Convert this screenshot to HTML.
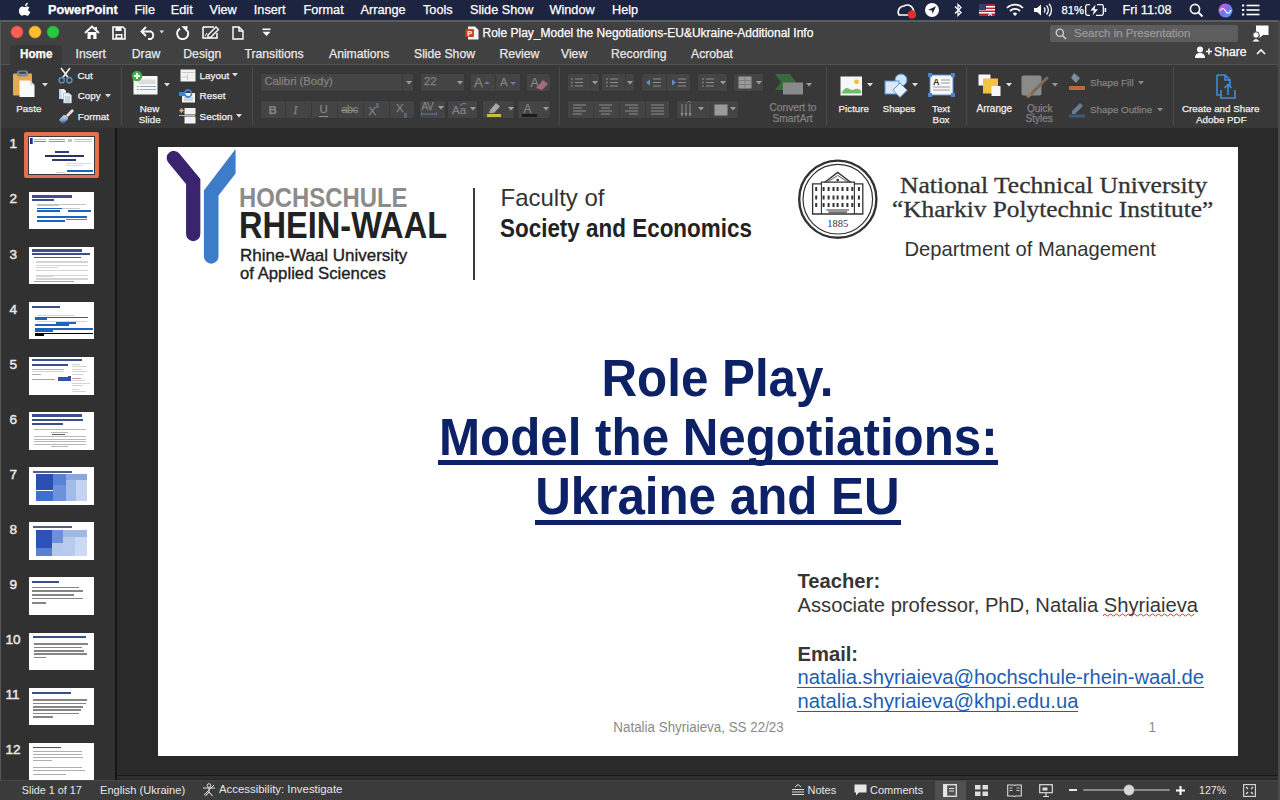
<!DOCTYPE html>
<html><head><meta charset="utf-8">
<style>
*{margin:0;padding:0;box-sizing:border-box}
html,body{width:1280px;height:800px;overflow:hidden;background:#282828;font-family:"Liberation Sans",sans-serif;position:relative}
.t{position:absolute;line-height:1;white-space:nowrap}
.k{-webkit-text-stroke:0.25px currentColor}
.r{position:absolute;display:block}
</style></head><body>

<div class="r" style="left:0px;top:0px;width:1280px;height:20px;background:#1d243f;"></div>
<div class="r" style="left:0px;top:20px;width:1280px;height:44px;background:#414141;"></div>
<div class="r" style="left:0px;top:20px;width:1280px;height:2px;background:#5a5d5e;"></div>
<div class="r" style="left:0px;top:64px;width:1280px;height:64px;background:#383838;"></div>
<div class="r" style="left:0px;top:64px;width:1280px;height:1px;background:#525252;"></div>
<div class="r" style="left:0px;top:128px;width:115px;height:652px;background:#313131;"></div>
<div class="r" style="left:0px;top:20px;width:1px;height:780px;background:#585858;"></div>
<div class="r" style="left:115px;top:128px;width:2px;height:652px;background:#161616;"></div>
<div class="r" style="left:117px;top:128px;width:1163px;height:647px;background:#2a2a2a;"></div>
<div class="r" style="left:115px;top:775px;width:1165px;height:1px;background:#171717;"></div>
<div class="r" style="left:117px;top:776px;width:1163px;height:4px;background:#2f2f2f;"></div>
<div class="r" style="left:117px;top:779px;width:1163px;height:1px;background:#262626;"></div>
<div class="r" style="left:0px;top:780px;width:1280px;height:20px;background:#3b3b3b;"></div>
<div class="r" style="left:0px;top:780px;width:1280px;height:1px;background:#454545;"></div>
<svg class="r" style="left:18px;top:2px;" width="14" height="16" viewBox="0 0 14 16"><path d="M9.6 0.5c0.1 1-0.3 2-0.9 2.7c-0.6 0.7-1.5 1.2-2.4 1.1c-0.1-1 0.4-2 0.9-2.6C7.8 1 8.8 0.5 9.6 0.5zM12.6 11.1c-0.4 0.9-0.6 1.3-1.1 2.1c-0.7 1.1-1.7 2.4-2.9 2.4c-1.1 0-1.4-0.7-2.8-0.7c-1.5 0-1.8 0.7-2.9 0.7c-1.2 0-2.1-1.2-2.8-2.3C-1.9 10.3-0.2 5 2.9 4.9c1.1 0 1.9 0.7 2.8 0.7c0.9 0 1.5-0.7 2.9-0.7c1 0 2.1 0.6 2.8 1.5C9 7.7 9.4 10.6 12.6 11.1z" fill="#fff" transform="translate(1.6,0.3) scale(0.86)"/></svg>
<div class="t k" style="left:48.00px;top:3.85px;font-size:12.7px;color:#fff;font-weight:700;font-family:'Liberation Sans',sans-serif;transform:scaleX(1.0);">PowerPoint</div>
<div class="t k" style="left:134.50px;top:3.85px;font-size:12.7px;color:#fff;font-weight:400;font-family:'Liberation Sans',sans-serif;">File</div>
<div class="t k" style="left:170.80px;top:3.85px;font-size:12.7px;color:#fff;font-weight:400;font-family:'Liberation Sans',sans-serif;">Edit</div>
<div class="t k" style="left:209.50px;top:3.85px;font-size:12.7px;color:#fff;font-weight:400;font-family:'Liberation Sans',sans-serif;">View</div>
<div class="t k" style="left:253.80px;top:3.85px;font-size:12.7px;color:#fff;font-weight:400;font-family:'Liberation Sans',sans-serif;">Insert</div>
<div class="t k" style="left:303.50px;top:3.85px;font-size:12.7px;color:#fff;font-weight:400;font-family:'Liberation Sans',sans-serif;">Format</div>
<div class="t k" style="left:360.50px;top:3.85px;font-size:12.7px;color:#fff;font-weight:400;font-family:'Liberation Sans',sans-serif;">Arrange</div>
<div class="t k" style="left:423.00px;top:3.85px;font-size:12.7px;color:#fff;font-weight:400;font-family:'Liberation Sans',sans-serif;">Tools</div>
<div class="t k" style="left:470.00px;top:3.85px;font-size:12.7px;color:#fff;font-weight:400;font-family:'Liberation Sans',sans-serif;">Slide Show</div>
<div class="t k" style="left:549.50px;top:3.85px;font-size:12.7px;color:#fff;font-weight:400;font-family:'Liberation Sans',sans-serif;">Window</div>
<div class="t k" style="left:612.00px;top:3.85px;font-size:12.7px;color:#fff;font-weight:400;font-family:'Liberation Sans',sans-serif;">Help</div>
<svg class="r" style="left:896px;top:3px;" width="22" height="16" viewBox="0 0 22 16"><path d="M3 12 a6 6 0 0 1 5-9 a6 6 0 0 1 9 3 a4 4 0 0 1 -2 6z" fill="none" stroke="#fff" stroke-width="1.6"/><circle cx="16" cy="11.5" r="4.2" fill="#e0302a"/></svg>
<svg class="r" style="left:925px;top:3px;" width="14" height="14" viewBox="0 0 14 14"><circle cx="7" cy="7" r="7" fill="#fff"/><path d="M3 7 L11 3.2 L7.5 11 L7 7.4z" fill="#1c223c"/></svg>
<svg class="r" style="left:953px;top:2px;" width="10" height="16" viewBox="0 0 10 16"><path d="M2 4.5 L8 10.5 L5 13.5 V2.5 L8 5.5 L2 11.5" fill="none" stroke="#fff" stroke-width="1.3"/></svg>
<svg class="r" style="left:979px;top:4px;" width="16" height="12" viewBox="0 0 16 12"><rect x="0" y="0" width="16" height="12" fill="#b22234"/><rect x="0" y="2" width="16" height="1.5" fill="#fff"/><rect x="0" y="5" width="16" height="1.5" fill="#fff"/><rect x="0" y="8" width="16" height="1.5" fill="#fff"/><rect x="0" y="0" width="7" height="6" fill="#3c3b6e"/><text x="9" y="12" font-size="6" fill="#fff" font-family="Liberation Sans" font-weight="700">A</text></svg>
<svg class="r" style="left:1006px;top:3px;" width="18" height="14" viewBox="0 0 18 14"><path d="M1 5 A11 11 0 0 1 17 5" fill="none" stroke="#fff" stroke-width="1.8"/><path d="M4 8 A7 7 0 0 1 14 8" fill="none" stroke="#fff" stroke-width="1.8"/><path d="M6.8 10.8 A3 3 0 0 1 11.2 10.8 L9 13z" fill="#fff"/></svg>
<svg class="r" style="left:1033px;top:3px;" width="20" height="14" viewBox="0 0 20 14"><path d="M1 5 H4 L8 1.5 V12.5 L4 9 H1z" fill="#fff"/><path d="M11 4.5 a3.5 3.5 0 0 1 0 5 M13.5 2.5 a6.5 6.5 0 0 1 0 9 M16 0.8 a9 9 0 0 1 0 12.4" fill="none" stroke="#fff" stroke-width="1.3"/></svg>
<div class="t k" style="left:1061.50px;top:5.12px;font-size:11.2px;color:#fff;font-weight:400;font-family:'Liberation Sans',sans-serif;">81%</div>
<svg class="r" style="left:1085px;top:4px;" width="24" height="12" viewBox="0 0 24 12"><path d="M5 0.7 H2.5 Q0.7 0.7 0.7 2.5 V9.5 Q0.7 11.3 2.5 11.3 H5 M12 0.7 H16.5 Q18.3 0.7 18.3 2.5 V9.5 Q18.3 11.3 16.5 11.3 H11" fill="none" stroke="#fff" stroke-width="1.3"/><rect x="19.6" y="4" width="1.6" height="4" fill="#fff"/><path d="M10.5 0.5 L5.5 6.5 H9 L7.5 11.5 L13 5.2 H9.6z" fill="#fff"/></svg>
<div class="t k" style="left:1122.50px;top:3.85px;font-size:12.7px;color:#fff;font-weight:400;font-family:'Liberation Sans',sans-serif;">Fri 11:08</div>
<svg class="r" style="left:1189px;top:3px;" width="15" height="15" viewBox="0 0 15 15"><circle cx="6" cy="6" r="4.6" fill="none" stroke="#fff" stroke-width="1.6"/><path d="M9.5 9.5 L13.5 13.5" stroke="#fff" stroke-width="1.8"/></svg>
<svg class="r" style="left:1218px;top:3px;" width="15" height="15" viewBox="0 0 15 15"><defs><linearGradient id="sg" x1="0" y1="0" x2="1" y2="1"><stop offset="0" stop-color="#e45bd0"/><stop offset="0.5" stop-color="#7c6cf0"/><stop offset="1" stop-color="#3ab0f0"/></linearGradient></defs><circle cx="7.5" cy="7.5" r="7" fill="url(#sg)"/><path d="M2 8 Q5 3 7.5 8 T13 7" fill="none" stroke="#fff" stroke-width="1.2"/></svg>
<svg class="r" style="left:1242px;top:4px;" width="18" height="12" viewBox="0 0 18 12"><rect x="0" y="0.5" width="2.2" height="2" fill="#fff"/><rect x="0" y="5" width="2.2" height="2" fill="#fff"/><rect x="0" y="9.5" width="2.2" height="2" fill="#fff"/><rect x="4.5" y="0.7" width="13" height="1.6" fill="#fff"/><rect x="4.5" y="5.2" width="13" height="1.6" fill="#fff"/><rect x="4.5" y="9.7" width="13" height="1.6" fill="#fff"/></svg>
<svg class="r" style="left:9.5px;top:24.8px;" width="50" height="14" viewBox="0 0 50 14"><circle cx="7" cy="7" r="6" fill="#fe5f57" stroke="#e0443e" stroke-width="0.6"/><circle cx="25" cy="7" r="6" fill="#febc2e" stroke="#dea123" stroke-width="0.6"/><circle cx="43" cy="7" r="6" fill="#28c840" stroke="#1aab29" stroke-width="0.6"/></svg>
<svg class="r" style="left:84px;top:25px;" width="16" height="15" viewBox="0 0 16 15"><path d="M1 8 L8 1.5 L15 8" fill="none" stroke="#fff" stroke-width="1.8" stroke-linejoin="miter"/><path d="M3.5 7 V14 H6.7 V10 H9.3 V14 H12.5 V7" fill="#fff"/><rect x="11" y="2" width="2" height="4" fill="#fff"/></svg>
<svg class="r" style="left:112px;top:26px;" width="14" height="14" viewBox="0 0 14 14"><path d="M1 1 H11 L13 3 V13 H1z" fill="none" stroke="#fff" stroke-width="1.6"/><rect x="3.5" y="1" width="6" height="4" fill="#fff"/><rect x="3.5" y="8" width="7" height="5" fill="#fff"/><rect x="5" y="9.5" width="4" height="2" fill="#434343"/></svg>
<svg class="r" style="left:140px;top:25px;" width="26" height="15" viewBox="0 0 26 15"><path d="M6 2 L1.5 6.5 L6 11" fill="none" stroke="#fff" stroke-width="1.8"/><path d="M2 6.5 H11 A4.2 4.2 0 0 1 11 14 H8" fill="none" stroke="#fff" stroke-width="1.8"/><path d="M19.5 5.5 L24 5.5 L21.75 8.5z" fill="#ddd"/></svg>
<svg class="r" style="left:175px;top:25px;" width="15" height="16" viewBox="0 0 15 16"><path d="M5 3.6 A5.6 5.6 0 1 0 12.2 5.2" fill="none" stroke="#fff" stroke-width="1.9"/><path d="M6.5 1.2 H12.8 L11.6 6.8z" fill="#fff"/></svg>
<svg class="r" style="left:202px;top:25px;" width="18" height="15" viewBox="0 0 18 15"><path d="M1 2 H12 M1 2 V13 H15 V8" fill="none" stroke="#fff" stroke-width="1.5"/><path d="M6 10 L14 2 L16.5 4.5 L8.5 12.5 H6z" fill="none" stroke="#fff" stroke-width="1.4"/><path d="M3 11 L5 8" stroke="#fff" stroke-width="1"/></svg>
<svg class="r" style="left:232px;top:26px;" width="12" height="14" viewBox="0 0 12 14"><path d="M1 1 H7 L11 5 V13 H1z M7 1 V5 H11" fill="none" stroke="#fff" stroke-width="1.4"/></svg>
<svg class="r" style="left:262px;top:28px;" width="9" height="9" viewBox="0 0 9 9"><rect x="0.5" y="0.5" width="8" height="1.6" fill="#fff"/><path d="M0.5 3.8 H8.5 L4.5 8z" fill="#fff"/></svg>
<svg class="r" style="left:465px;top:26px;" width="14" height="14" viewBox="0 0 14 14"><path d="M3 0.5 H10 L13.5 4 V13.5 H3z" fill="#f4f4f4"/><rect x="0.5" y="3" width="8.5" height="8" rx="1" fill="#d0422b"/><text x="2.2" y="9.8" font-size="7.5" font-family="Liberation Sans" font-weight="700" fill="#fff">P</text></svg>
<div class="t k" style="left:482.50px;top:27.04px;font-size:12.0px;color:#fff;font-weight:400;font-family:'Liberation Sans',sans-serif;">Role Play_Model the Negotiations-EU&amp;Ukraine-Additional Info</div>
<div class="r" style="left:1050px;top:25px;width:188px;height:17px;background:#5d5d5d;border-radius:2px;"></div>
<svg class="r" style="left:1055px;top:28px;" width="12" height="12" viewBox="0 0 12 12"><circle cx="4.8" cy="4.8" r="3.6" fill="none" stroke="#cfcfcf" stroke-width="1.3"/><path d="M7.5 7.5 L11 11" stroke="#cfcfcf" stroke-width="1.5"/></svg>
<div class="t k" style="left:1074.00px;top:27.56px;font-size:11.5px;color:#9a9a9a;font-weight:400;font-family:'Liberation Sans',sans-serif;">Search in Presentation</div>
<svg class="r" style="left:1252px;top:24px;" width="18" height="18" viewBox="0 0 18 18"><path d="M4 1.5 H16.5 V11 H11 L7.5 14 V11 H4z" fill="#fff"/><circle cx="4" cy="11" r="3.2" fill="#fff" stroke="#434343" stroke-width="1"/><path d="M0.5 17.5 Q4 12.5 7.5 17.5z" fill="#fff"/></svg>
<div class="r" style="left:10px;top:45px;width:52px;height:20px;background:#383838;border-radius:3px 3px 0 0;"></div>
<div class="t k" style="left:19.50px;top:47.87px;font-size:12.2px;color:#fff;font-weight:700;font-family:'Liberation Sans',sans-serif;transform:scaleX(0.96);transform-origin:0 0;">Home</div>
<div class="t k" style="left:75.50px;top:47.87px;font-size:12.2px;color:#e8e8e8;font-weight:400;font-family:'Liberation Sans',sans-serif;">Insert</div>
<div class="t k" style="left:131.80px;top:47.87px;font-size:12.2px;color:#e8e8e8;font-weight:400;font-family:'Liberation Sans',sans-serif;">Draw</div>
<div class="t k" style="left:183.30px;top:47.87px;font-size:12.2px;color:#e8e8e8;font-weight:400;font-family:'Liberation Sans',sans-serif;">Design</div>
<div class="t k" style="left:244.50px;top:47.87px;font-size:12.2px;color:#e8e8e8;font-weight:400;font-family:'Liberation Sans',sans-serif;">Transitions</div>
<div class="t k" style="left:329.00px;top:47.87px;font-size:12.2px;color:#e8e8e8;font-weight:400;font-family:'Liberation Sans',sans-serif;">Animations</div>
<div class="t k" style="left:414.00px;top:47.87px;font-size:12.2px;color:#e8e8e8;font-weight:400;font-family:'Liberation Sans',sans-serif;">Slide Show</div>
<div class="t k" style="left:499.40px;top:47.87px;font-size:12.2px;color:#e8e8e8;font-weight:400;font-family:'Liberation Sans',sans-serif;">Review</div>
<div class="t k" style="left:561.00px;top:47.87px;font-size:12.2px;color:#e8e8e8;font-weight:400;font-family:'Liberation Sans',sans-serif;">View</div>
<div class="t k" style="left:611.00px;top:47.87px;font-size:12.2px;color:#e8e8e8;font-weight:400;font-family:'Liberation Sans',sans-serif;">Recording</div>
<div class="t k" style="left:691.00px;top:47.87px;font-size:12.2px;color:#e8e8e8;font-weight:400;font-family:'Liberation Sans',sans-serif;">Acrobat</div>
<svg class="r" style="left:1195px;top:46px;" width="17" height="12" viewBox="0 0 17 12"><circle cx="5" cy="3.5" r="3" fill="#fff"/><path d="M0 12 Q0 7 5 7 Q10 7 10 12z" fill="#fff"/><path d="M11 5.5 H17 M14 2.5 V8.5" stroke="#fff" stroke-width="1.6"/></svg>
<div class="t k" style="left:1214.00px;top:46.47px;font-size:12.2px;color:#fff;font-weight:400;font-family:'Liberation Sans',sans-serif;">Share</div>
<svg class="r" style="left:1256px;top:48px;" width="10" height="7" viewBox="0 0 10 7"><path d="M1 6 L5 2 L9 6" fill="none" stroke="#fff" stroke-width="1.6"/></svg>
<svg class="r" style="left:12px;top:70px;" width="24" height="28" viewBox="0 0 24 28"><rect x="1" y="3.5" width="19" height="22" rx="1" fill="#e8a84e"/><rect x="5" y="0.5" width="11" height="6" rx="2" fill="#7b8a92"/><rect x="7" y="1.8" width="7" height="2" rx="1" fill="#3d4448"/><path d="M7.5 10.5 H18 L22.5 15 V27 H7.5z" fill="#fafafa"/><path d="M18 10.5 V15 H22.5" fill="#d8d8d8"/></svg>
<svg class="r" style="left:41.7px;top:83px;" width="6" height="4" viewBox="0 0 6 4"><path d="M0 0 H6 L3 3.5z" fill="#ddd"/></svg>
<div class="t k" style="left:16.30px;top:103.70px;font-size:9.8px;color:#f0f0f0;font-weight:400;font-family:'Liberation Sans',sans-serif;">Paste</div>
<svg class="r" style="left:58px;top:67px;" width="15" height="17" viewBox="0 0 15 17"><path d="M3 1 L10.5 11 M12 1 L4.5 11" stroke="#f2f2f2" stroke-width="1.6"/><circle cx="3.7" cy="13.2" r="2.6" fill="none" stroke="#5d86ad" stroke-width="1.6"/><circle cx="11.3" cy="13.2" r="2.6" fill="none" stroke="#5d86ad" stroke-width="1.6"/></svg>
<div class="t k" style="left:77.40px;top:70.92px;font-size:9.9px;color:#f0f0f0;font-weight:400;font-family:'Liberation Sans',sans-serif;">Cut</div>
<svg class="r" style="left:58px;top:88px;" width="15" height="16" viewBox="0 0 15 16"><path d="M1 1 H6 L8 3 V11 H1z" fill="#f2f2f2"/><rect x="1" y="1" width="2.5" height="10" fill="#bcd4ec"/><path d="M5.5 5 H11 L13.5 7.5 V15 H5.5z" fill="#e6eef8" stroke="#9fb4c8" stroke-width="0.6"/><path d="M7 9 H12 M7 11 H12 M7 13 H12" stroke="#8aa" stroke-width="0.7"/></svg>
<div class="t k" style="left:77.70px;top:91.22px;font-size:9.9px;color:#f0f0f0;font-weight:400;font-family:'Liberation Sans',sans-serif;">Copy</div>
<svg class="r" style="left:105.2px;top:94px;" width="6" height="4" viewBox="0 0 6 4"><path d="M0 0 H6 L3 3.5z" fill="#ddd"/></svg>
<svg class="r" style="left:58px;top:109px;" width="16" height="16" viewBox="0 0 16 16"><defs><linearGradient id="bg1" x1="0" y1="0" x2="0" y2="1"><stop offset="0" stop-color="#dbe8f4"/><stop offset="0.55" stop-color="#7fa6d0"/><stop offset="1" stop-color="#24407a"/></linearGradient></defs><path d="M9.8 6.2 L14.2 1.8" stroke="#f3dde4" stroke-width="2.8" stroke-linecap="round"/><path d="M7.2 6 L10 8.8 L8.8 10 L6 7.2z" fill="#e8e0c8"/><path d="M0.8 11 L6 5.8 L10.2 10 L5 15.2z" fill="url(#bg1)"/></svg>
<div class="t k" style="left:77.70px;top:111.62px;font-size:9.9px;color:#f0f0f0;font-weight:400;font-family:'Liberation Sans',sans-serif;">Format</div>
<div class="r" style="left:121px;top:67px;width:1px;height:58px;background:#4c4c4c;"></div>
<svg class="r" style="left:131px;top:70px;" width="28" height="26" viewBox="0 0 28 26"><rect x="2.5" y="6" width="24" height="18.5" fill="#f7f7f7"/><rect x="7.5" y="9.5" width="17" height="4.5" rx="1" fill="#dcdcdc"/><path d="M9 16.5 H25 M9 19.5 H25" stroke="#8fb0c0" stroke-width="1"/><path d="M6 16.5 H8 M6 19.5 H8" stroke="#7fb07f" stroke-width="1"/><circle cx="6" cy="6" r="5.2" fill="#3fae49"/><path d="M6 3 V9 M3 6 H9" stroke="#fff" stroke-width="1.8"/></svg>
<svg class="r" style="left:163.8px;top:83px;" width="6" height="4" viewBox="0 0 6 4"><path d="M0 0 H6 L3 3.5z" fill="#ddd"/></svg>
<div class="t k" style="left:139.70px;top:103.80px;font-size:9.8px;color:#f0f0f0;font-weight:400;font-family:'Liberation Sans',sans-serif;">New</div>
<div class="t k" style="left:138.80px;top:114.50px;font-size:9.8px;color:#f0f0f0;font-weight:400;font-family:'Liberation Sans',sans-serif;">Slide</div>
<svg class="r" style="left:180px;top:69px;" width="16" height="13" viewBox="0 0 16 13"><rect x="0.5" y="0.5" width="15" height="12" fill="#f2f2f2"/><path d="M2 3.5 H14 M7.5 5.5 V11 M2 8 H7" stroke="#c8c8c8" stroke-width="1"/></svg>
<div class="t k" style="left:199.60px;top:70.62px;font-size:9.9px;color:#f0f0f0;font-weight:400;font-family:'Liberation Sans',sans-serif;">Layout</div>
<svg class="r" style="left:232px;top:73.2px;" width="6" height="4" viewBox="0 0 6 4"><path d="M0 0 H6 L3 3.5z" fill="#ddd"/></svg>
<svg class="r" style="left:179px;top:88px;" width="17" height="15" viewBox="0 0 17 15"><rect x="3" y="5" width="13" height="9.5" fill="#f2f2f2"/><path d="M5 10 H14 M5 12 H14" stroke="#aaa" stroke-width="0.8"/><rect x="0" y="4" width="6" height="4" fill="#3b82d8"/><circle cx="9" cy="5.5" r="3.5" fill="none" stroke="#3b82d8" stroke-width="1.8"/></svg>
<div class="t k" style="left:199.60px;top:91.32px;font-size:9.9px;color:#f0f0f0;font-weight:400;font-family:'Liberation Sans',sans-serif;">Reset</div>
<svg class="r" style="left:179px;top:107px;" width="17" height="17" viewBox="0 0 17 17"><rect x="5.5" y="1" width="11" height="6.5" fill="#f2f2f2"/><rect x="5.5" y="9.5" width="11" height="7" fill="#f2f2f2"/><path d="M0 8.5 H16" stroke="#e8c890" stroke-width="0.9"/><path d="M2.5 1 L2.5 6 M0 3.5 H5 M0.8 1.8 L4.2 5.2 M4.2 1.8 L0.8 5.2" stroke="#e8b86a" stroke-width="0.8"/></svg>
<div class="t k" style="left:199.60px;top:111.62px;font-size:9.9px;color:#f0f0f0;font-weight:400;font-family:'Liberation Sans',sans-serif;">Section</div>
<svg class="r" style="left:235.5px;top:114.3px;" width="6" height="4" viewBox="0 0 6 4"><path d="M0 0 H6 L3 3.5z" fill="#ddd"/></svg>
<div class="r" style="left:252px;top:67px;width:1px;height:58px;background:#4c4c4c;"></div>
<div class="r" style="left:260px;top:73px;width:154px;height:19px;background:#444444;border:1px solid #363636;border-radius:2px;"></div>
<div class="t k" style="left:264.40px;top:76.43px;font-size:11.3px;color:#828282;font-weight:400;font-family:'Liberation Sans',sans-serif;">Calibri (Body)</div>
<div class="r" style="left:402px;top:74px;width:1px;height:17px;background:#3a3a3a;"></div>
<svg class="r" style="left:406px;top:80.5px;" width="6" height="4" viewBox="0 0 6 4"><path d="M0 0 H6 L3 3.5z" fill="#9a9a9a"/></svg>
<div class="r" style="left:420px;top:73px;width:45px;height:19px;background:#444444;border:1px solid #363636;border-radius:2px;"></div>
<div class="t k" style="left:424.00px;top:76.43px;font-size:11.3px;color:#828282;font-weight:400;font-family:'Liberation Sans',sans-serif;">22</div>
<svg class="r" style="left:456.5px;top:80.5px;" width="6" height="4" viewBox="0 0 6 4"><path d="M0 0 H6 L3 3.5z" fill="#9a9a9a"/></svg>
<div class="r" style="left:470px;top:73px;width:51px;height:19px;background:#444444;border:1px solid #363636;border-radius:2px;"></div>
<div class="r" style="left:495px;top:74px;width:1px;height:17px;background:#3a3a3a;"></div>
<div class="t k" style="left:474.00px;top:75.77px;font-size:13.5px;color:#828282;font-weight:400;font-family:'Liberation Sans',sans-serif;">A</div>
<svg class="r" style="left:484px;top:80px;" width="6" height="6" viewBox="0 0 6 6"><path d="M0 4 L3 1 L6 4" fill="#5b7fa8"/></svg>
<div class="t k" style="left:500.00px;top:76.76px;font-size:11.5px;color:#828282;font-weight:400;font-family:'Liberation Sans',sans-serif;">A</div>
<svg class="r" style="left:510px;top:81px;" width="6" height="5" viewBox="0 0 6 5"><path d="M0 1 H6 L3 4z" fill="#5b7fa8"/></svg>
<div class="r" style="left:526px;top:73px;width:25px;height:19px;background:#444444;border:1px solid #363636;border-radius:2px;"></div>
<svg class="r" style="left:528px;top:74px;" width="22" height="17" viewBox="0 0 22 17"><text x="2.5" y="13" font-size="12.5" font-family="Liberation Sans" fill="#8c8c8c">A</text><path d="M8 14 L15 6 L20 10 L14 16z" fill="#a86878"/></svg>
<div class="r" style="left:260px;top:100px;width:155px;height:19px;background:#444444;border:1px solid #363636;border-radius:2px;"></div>
<div class="r" style="left:285px;top:101px;width:1px;height:17px;background:#3a3a3a;"></div>
<div class="r" style="left:311px;top:101px;width:1px;height:17px;background:#3a3a3a;"></div>
<div class="r" style="left:337px;top:101px;width:1px;height:17px;background:#3a3a3a;"></div>
<div class="r" style="left:363px;top:101px;width:1px;height:17px;background:#3a3a3a;"></div>
<div class="r" style="left:389px;top:101px;width:1px;height:17px;background:#3a3a3a;"></div>
<div class="t k" style="left:268.50px;top:104.56px;font-size:11.5px;color:#828282;font-weight:700;font-family:'Liberation Sans',sans-serif;">B</div>
<div class="t k" style="left:293.50px;top:104.56px;font-size:11.5px;color:#828282;font-weight:400;font-family:'Liberation Sans',sans-serif;font-style:italic;font-family:'Liberation Serif',serif;">I</div>
<div class="t k" style="left:319.50px;top:103.76px;font-size:11.5px;color:#828282;font-weight:400;font-family:'Liberation Sans',sans-serif;">U</div>
<div class="r" style="left:319px;top:116px;width:9px;height:1px;background:#8c8c8c;"></div>
<div class="t k" style="left:341.50px;top:104.19px;font-size:11px;color:#828282;font-weight:400;font-family:'Liberation Sans',sans-serif;letter-spacing:-0.5px;">abc</div>
<div class="r" style="left:341px;top:110px;width:17px;height:1px;background:#8c8c8c;"></div>
<div class="t k" style="left:368.50px;top:105.76px;font-size:11.5px;color:#828282;font-weight:400;font-family:'Liberation Sans',sans-serif;">X</div>
<div class="r" style="left:376px;top:103px;width:3px;height:5px;background:#4e6680;"></div>
<div class="t k" style="left:396.00px;top:103.26px;font-size:11.5px;color:#828282;font-weight:400;font-family:'Liberation Sans',sans-serif;">X</div>
<div class="r" style="left:404px;top:113px;width:3px;height:5px;background:#4e6680;"></div>
<div class="r" style="left:419px;top:100px;width:27px;height:19px;background:#444444;border:1px solid #363636;border-radius:2px;"></div>
<div class="t k" style="left:421.50px;top:102.03px;font-size:10px;color:#828282;font-weight:400;font-family:'Liberation Sans',sans-serif;letter-spacing:-0.5px;">AV</div>
<svg class="r" style="left:421px;top:112px;" width="16" height="4" viewBox="0 0 16 4"><path d="M0 2 H16 M0 0 V4 M16 0 V4" stroke="#5b7fa8" stroke-width="1"/></svg>
<svg class="r" style="left:438px;top:106px;" width="6" height="4" viewBox="0 0 6 4"><path d="M0 0 H6 L3 3.5z" fill="#9a9a9a"/></svg>
<div class="r" style="left:447px;top:100px;width:31px;height:19px;background:#444444;border:1px solid #363636;border-radius:2px;"></div>
<div class="t k" style="left:452.00px;top:105.26px;font-size:11.5px;color:#828282;font-weight:400;font-family:'Liberation Sans',sans-serif;">Aa</div>
<svg class="r" style="left:459px;top:102px;" width="8" height="5" viewBox="0 0 8 5"><path d="M1 4 Q4 0 7 2" fill="none" stroke="#5b7fa8" stroke-width="1.2"/></svg>
<svg class="r" style="left:470px;top:106.5px;" width="6" height="4" viewBox="0 0 6 4"><path d="M0 0 H6 L3 3.5z" fill="#9a9a9a"/></svg>
<div class="r" style="left:482px;top:100px;width:33px;height:19px;background:#444444;border:1px solid #363636;border-radius:2px;"></div>
<svg class="r" style="left:486px;top:101px;" width="16" height="17" viewBox="0 0 16 17"><path d="M4 9 L10 2 L14 5.5 L8 12z" fill="#a8a8a8"/><path d="M4 9 L3 12 L8 12" fill="#a8a8a8"/><rect x="1" y="13" width="14" height="3" fill="#c8bf3a"/></svg>
<svg class="r" style="left:507.5px;top:106.5px;" width="6" height="4" viewBox="0 0 6 4"><path d="M0 0 H6 L3 3.5z" fill="#b89a9a"/></svg>
<div class="r" style="left:517px;top:100px;width:34px;height:19px;background:#444444;border:1px solid #363636;border-radius:2px;"></div>
<div class="t k" style="left:523.50px;top:102.64px;font-size:12px;color:#828282;font-weight:400;font-family:'Liberation Sans',sans-serif;">A</div>
<div class="r" style="left:522px;top:114px;width:15px;height:3px;background:#1a1a1a;"></div>
<svg class="r" style="left:543px;top:106.5px;" width="6" height="4" viewBox="0 0 6 4"><path d="M0 0 H6 L3 3.5z" fill="#9a9a9a"/></svg>
<div class="r" style="left:559px;top:67px;width:1px;height:58px;background:#4c4c4c;"></div>
<div class="r" style="left:567px;top:73px;width:33px;height:19px;background:#444444;border:1px solid #363636;border-radius:2px;"></div>
<div class="r" style="left:590px;top:74px;width:1px;height:17px;background:#3a3a3a;"></div>
<svg class="r" style="left:570px;top:77px;" width="14" height="11" viewBox="0 0 14 11"><path d="M5 2 H13 M5 5.5 H13 M5 9 H13" stroke="#8c8c8c" stroke-width="1"/><circle cx="2" cy="2" r="1" fill="#5b7fa8"/><circle cx="2" cy="5.5" r="1" fill="#5b7fa8"/><circle cx="2" cy="9" r="1" fill="#5b7fa8"/></svg>
<svg class="r" style="left:592px;top:80.5px;" width="6" height="4" viewBox="0 0 6 4"><path d="M0 0 H6 L3 3.5z" fill="#9a9a9a"/></svg>
<div class="r" style="left:601px;top:73px;width:34px;height:19px;background:#444444;border:1px solid #363636;border-radius:2px;"></div>
<div class="r" style="left:625px;top:74px;width:1px;height:17px;background:#3a3a3a;"></div>
<svg class="r" style="left:605px;top:77px;" width="14" height="11" viewBox="0 0 14 11"><path d="M5 2 H13 M5 5.5 H13 M5 9 H13" stroke="#8c8c8c" stroke-width="1"/><circle cx="2" cy="2" r="1" fill="#5b7fa8"/><circle cx="2" cy="5.5" r="1" fill="#5b7fa8"/><circle cx="2" cy="9" r="1" fill="#5b7fa8"/></svg>
<svg class="r" style="left:627px;top:80.5px;" width="6" height="4" viewBox="0 0 6 4"><path d="M0 0 H6 L3 3.5z" fill="#9a9a9a"/></svg>
<div class="r" style="left:641px;top:73px;width:50px;height:19px;background:#444444;border:1px solid #363636;border-radius:2px;"></div>
<div class="r" style="left:666px;top:74px;width:1px;height:17px;background:#3a3a3a;"></div>
<svg class="r" style="left:645px;top:77px;" width="18" height="11" viewBox="0 0 18 11"><path d="M8 2 H16 M8 5.5 H16 M8 9 H16" stroke="#8c8c8c" stroke-width="1"/><path d="M1 5.5 L5 2.5 V8.5z" fill="#5b8fd0"/></svg>
<svg class="r" style="left:670px;top:77px;" width="18" height="11" viewBox="0 0 18 11"><path d="M8 2 H16 M8 5.5 H16 M8 9 H16" stroke="#8c8c8c" stroke-width="1"/><path d="M6 5.5 L2 2.5 V8.5z" fill="#5b8fd0"/></svg>
<div class="r" style="left:697px;top:73px;width:31px;height:19px;background:#444444;border:1px solid #363636;border-radius:2px;"></div>
<svg class="r" style="left:701px;top:77px;" width="14" height="11" viewBox="0 0 14 11"><path d="M5 2 H13 M5 5.5 H13 M5 9 H13" stroke="#8c8c8c" stroke-width="1"/><circle cx="2" cy="2" r="1" fill="#5b7fa8"/><circle cx="2" cy="5.5" r="1" fill="#5b7fa8"/><circle cx="2" cy="9" r="1" fill="#5b7fa8"/></svg>
<svg class="r" style="left:720px;top:80.5px;" width="6" height="4" viewBox="0 0 6 4"><path d="M0 0 H6 L3 3.5z" fill="#9a9a9a"/></svg>
<div class="r" style="left:733px;top:73px;width:31px;height:19px;background:#444444;border:1px solid #363636;border-radius:2px;"></div>
<svg class="r" style="left:738px;top:76px;" width="14" height="13" viewBox="0 0 14 13"><rect x="0.5" y="0.5" width="13" height="12" fill="#9a9a9a"/><path d="M0.5 4.5 H13.5 M0.5 8.5 H13.5 M7 0.5 V12.5" stroke="#777" stroke-width="0.8"/></svg>
<svg class="r" style="left:756px;top:80.5px;" width="6" height="4" viewBox="0 0 6 4"><path d="M0 0 H6 L3 3.5z" fill="#9a9a9a"/></svg>
<div class="r" style="left:567px;top:100px;width:103px;height:19px;background:#444444;border:1px solid #363636;border-radius:2px;"></div>
<div class="r" style="left:593px;top:101px;width:1px;height:17px;background:#3a3a3a;"></div>
<div class="r" style="left:619px;top:101px;width:1px;height:17px;background:#3a3a3a;"></div>
<div class="r" style="left:645px;top:101px;width:1px;height:17px;background:#3a3a3a;"></div>
<svg class="r" style="left:573px;top:103px;" width="14" height="13" viewBox="0 0 14 13"><path d="M0 2 H13" stroke="#8c8c8c" stroke-width="1"/><path d="M0 5 H9" stroke="#8c8c8c" stroke-width="1"/><path d="M0 8 H13" stroke="#8c8c8c" stroke-width="1"/><path d="M0 11 H9" stroke="#8c8c8c" stroke-width="1"/></svg>
<svg class="r" style="left:599px;top:103px;" width="14" height="13" viewBox="0 0 14 13"><path d="M0.0 2 H13.0" stroke="#8c8c8c" stroke-width="1"/><path d="M2.0 5 H11.0" stroke="#8c8c8c" stroke-width="1"/><path d="M0.0 8 H13.0" stroke="#8c8c8c" stroke-width="1"/><path d="M2.0 11 H11.0" stroke="#8c8c8c" stroke-width="1"/></svg>
<svg class="r" style="left:625px;top:103px;" width="14" height="13" viewBox="0 0 14 13"><path d="M0 2 H13" stroke="#8c8c8c" stroke-width="1"/><path d="M4 5 H13" stroke="#8c8c8c" stroke-width="1"/><path d="M0 8 H13" stroke="#8c8c8c" stroke-width="1"/><path d="M4 11 H13" stroke="#8c8c8c" stroke-width="1"/></svg>
<svg class="r" style="left:651px;top:103px;" width="14" height="13" viewBox="0 0 14 13"><path d="M0 2 H13" stroke="#8c8c8c" stroke-width="1"/><path d="M0 5 H13" stroke="#8c8c8c" stroke-width="1"/><path d="M0 8 H13" stroke="#8c8c8c" stroke-width="1"/><path d="M0 11 H13" stroke="#8c8c8c" stroke-width="1"/></svg>
<div class="r" style="left:676px;top:100px;width:63px;height:19px;background:#444444;border:1px solid #363636;border-radius:2px;"></div>
<div class="r" style="left:710px;top:101px;width:1px;height:17px;background:#3a3a3a;"></div>
<svg class="r" style="left:680px;top:101px;" width="18" height="17" viewBox="0 0 18 17"><path d="M2 3 V15 M6 3 V15 M10 3 V15" stroke="#8c8c8c" stroke-width="1"/><path d="M2 15 L0.5 12 H3.5z M6 15 L4.5 12 H7.5z M10 15 L8.5 12 H11.5z" fill="#8c8c8c"/><path d="M7 2 L9 0 L11 2" stroke="#5b7fa8" fill="none"/></svg>
<svg class="r" style="left:698px;top:106.5px;" width="6" height="4" viewBox="0 0 6 4"><path d="M0 0 H6 L3 3.5z" fill="#9a9a9a"/></svg>
<svg class="r" style="left:714px;top:104px;" width="14" height="12" viewBox="0 0 14 12"><rect x="0.5" y="0.5" width="13" height="11" fill="#9a9a9a"/></svg>
<svg class="r" style="left:730px;top:106.5px;" width="6" height="4" viewBox="0 0 6 4"><path d="M0 0 H6 L3 3.5z" fill="#9a9a9a"/></svg>
<svg class="r" style="left:775px;top:74px;" width="29" height="21" viewBox="0 0 29 21"><path d="M0 0 H15 L21 8 L15 16 H0 L6 8z" fill="#3a6a3c"/><rect x="8" y="8.5" width="20" height="12" fill="#8a8a8a"/><path d="M10 12 H26 M10 15 H26 M10 18 H26" stroke="#888" stroke-width="0.8"/></svg>
<svg class="r" style="left:806px;top:83px;" width="6" height="4" viewBox="0 0 6 4"><path d="M0 0 H6 L3 3.5z" fill="#9a9a9a"/></svg>
<div class="t k" style="left:769.50px;top:103.46px;font-size:10.2px;color:#828282;font-weight:400;font-family:'Liberation Sans',sans-serif;">Convert to</div>
<div class="t k" style="left:772.50px;top:114.16px;font-size:10.2px;color:#828282;font-weight:400;font-family:'Liberation Sans',sans-serif;">SmartArt</div>
<div class="r" style="left:826px;top:67px;width:1px;height:58px;background:#4c4c4c;"></div>
<svg class="r" style="left:839.5px;top:75.5px;" width="23" height="20" viewBox="0 0 23 20"><rect x="0.5" y="0.5" width="21.5" height="19" fill="#f7f7f7"/><circle cx="16.5" cy="5.8" r="2.4" fill="#f0c030"/><path d="M1.5 17 Q5 10.5 8.5 12.5 Q12 15 15 13 Q18 12 21 14.5 V17.5 H1.5z" fill="#6cbf6a"/></svg>
<svg class="r" style="left:867px;top:83px;" width="6" height="4" viewBox="0 0 6 4"><path d="M0 0 H6 L3 3.5z" fill="#ddd"/></svg>
<div class="t k" style="left:838.60px;top:103.64px;font-size:9.75px;color:#f0f0f0;font-weight:400;font-family:'Liberation Sans',sans-serif;">Picture</div>
<svg class="r" style="left:884px;top:73px;" width="26" height="25" viewBox="0 0 26 25"><circle cx="17" cy="7" r="6" fill="#cde4f8" stroke="#5a8fcf" stroke-width="1"/><rect x="1" y="8" width="14" height="13" fill="#dbe9f7" stroke="#5a8fcf" stroke-width="1"/><path d="M16 10 L23.2 17.2 L16 24.4 L8.8 17.2z" fill="#e8f1fb" stroke="#5a8fcf" stroke-width="1"/></svg>
<svg class="r" style="left:912px;top:83px;" width="6" height="4" viewBox="0 0 6 4"><path d="M0 0 H6 L3 3.5z" fill="#ddd"/></svg>
<div class="t k" style="left:882.80px;top:103.77px;font-size:9.6px;color:#f0f0f0;font-weight:400;font-family:'Liberation Sans',sans-serif;">Shapes</div>
<svg class="r" style="left:928px;top:73px;" width="27" height="24" viewBox="0 0 27 24"><rect x="2" y="2" width="23" height="20" fill="#f7f7f7" stroke="#5a8fcf" stroke-width="1"/><text x="5" y="12" font-size="9" font-weight="700" font-family="Liberation Sans" fill="#333">A</text><path d="M13 7 H22 M13 10 H22 M5 14 H22 M5 17 H22" stroke="#888" stroke-width="0.8"/><rect x="0" y="0" width="4" height="4" fill="#4a86d0"/><rect x="23" y="0" width="4" height="4" fill="#4a86d0"/><rect x="0" y="20" width="4" height="4" fill="#4a86d0"/><rect x="23" y="20" width="4" height="4" fill="#4a86d0"/></svg>
<div class="t k" style="left:932.00px;top:103.60px;font-size:9.8px;color:#f0f0f0;font-weight:400;font-family:'Liberation Sans',sans-serif;">Text</div>
<div class="t k" style="left:932.60px;top:114.60px;font-size:9.8px;color:#f0f0f0;font-weight:400;font-family:'Liberation Sans',sans-serif;">Box</div>
<div class="r" style="left:966px;top:67px;width:1px;height:58px;background:#4c4c4c;"></div>
<svg class="r" style="left:978px;top:74px;" width="24" height="24" viewBox="0 0 24 24"><rect x="0.5" y="0.5" width="12" height="11" fill="#f7f7f7"/><rect x="5" y="4.5" width="15" height="15" fill="#f5c342"/><rect x="13.5" y="12" width="9" height="10" fill="#f7f7f7"/></svg>
<svg class="r" style="left:1006px;top:83px;" width="6" height="4" viewBox="0 0 6 4"><path d="M0 0 H6 L3 3.5z" fill="#ddd"/></svg>
<div class="t k" style="left:976.50px;top:103.63px;font-size:10px;color:#f0f0f0;font-weight:400;font-family:'Liberation Sans',sans-serif;">Arrange</div>
<svg class="r" style="left:1021px;top:75px;" width="30" height="23" viewBox="0 0 30 23"><rect x="0.5" y="0.5" width="20" height="20" rx="2" fill="#8a8a8a"/><path d="M8 21 L26 3" stroke="#7a6a5a" stroke-width="3" stroke-linecap="round"/><path d="M6 22 L10 18" stroke="#a07850" stroke-width="3"/></svg>
<svg class="r" style="left:1052px;top:83px;" width="6" height="4" viewBox="0 0 6 4"><path d="M0 0 H6 L3 3.5z" fill="#9a9a9a"/></svg>
<div class="t k" style="left:1027.00px;top:103.63px;font-size:10px;color:#828282;font-weight:400;font-family:'Liberation Sans',sans-serif;">Quick</div>
<div class="t k" style="left:1025.50px;top:114.33px;font-size:10px;color:#828282;font-weight:400;font-family:'Liberation Sans',sans-serif;">Styles</div>
<svg class="r" style="left:1069px;top:72px;" width="17" height="20" viewBox="0 0 17 20"><path d="M5 1 L11 6 L7 11 L2 6z" fill="#7a8ca0"/><rect x="0" y="14" width="16" height="4" fill="#b86a3a"/></svg>
<div class="t k" style="left:1090.00px;top:78.20px;font-size:9.8px;color:#828282;font-weight:400;font-family:'Liberation Sans',sans-serif;">Shape Fill</div>
<svg class="r" style="left:1138px;top:81px;" width="6" height="4" viewBox="0 0 6 4"><path d="M0 0 H6 L3 3.5z" fill="#8a8a8a"/></svg>
<svg class="r" style="left:1069px;top:100px;" width="17" height="18" viewBox="0 0 17 18"><path d="M3 11 L11 3 L14 6 L6 14 H3z" fill="#6a7c90"/><rect x="0" y="14.5" width="16" height="3" fill="#3a5a7a"/></svg>
<div class="t k" style="left:1090.00px;top:105.30px;font-size:9.8px;color:#828282;font-weight:400;font-family:'Liberation Sans',sans-serif;">Shape Outline</div>
<svg class="r" style="left:1157px;top:108px;" width="6" height="4" viewBox="0 0 6 4"><path d="M0 0 H6 L3 3.5z" fill="#8a8a8a"/></svg>
<div class="r" style="left:1173px;top:67px;width:1px;height:58px;background:#4c4c4c;"></div>
<svg class="r" style="left:1209px;top:73px;" width="28" height="28" viewBox="0 0 28 28"><path d="M8 2 H16 L21 7 V13 M8 2 V22 H13" fill="none" stroke="#3c8bd9" stroke-width="1.6"/><path d="M16 2 V7 H21" fill="none" stroke="#3c8bd9" stroke-width="1.6"/><path d="M12 17 V25 H26 V17" fill="none" stroke="#3c8bd9" stroke-width="1.6"/><path d="M19 22 V12 M15.5 15 L19 11.5 L22.5 15" fill="none" stroke="#3c8bd9" stroke-width="1.6"/></svg>
<div class="t k" style="left:1182.00px;top:103.80px;font-size:9.8px;color:#f0f0f0;font-weight:400;font-family:'Liberation Sans',sans-serif;">Create and Share</div>
<div class="t k" style="left:1196.00px;top:114.50px;font-size:9.8px;color:#f0f0f0;font-weight:400;font-family:'Liberation Sans',sans-serif;">Adobe PDF</div>
<div class="t" style="left:21.80px;top:784.86px;font-size:10.8px;color:#e6e6e6;font-weight:400;font-family:'Liberation Sans',sans-serif;">Slide 1 of 17</div>
<div class="t" style="left:100.00px;top:784.60px;font-size:11.1px;color:#e6e6e6;font-weight:400;font-family:'Liberation Sans',sans-serif;">English (Ukraine)</div>
<svg class="r" style="left:202px;top:783px;" width="14" height="14" viewBox="0 0 14 14"><circle cx="7" cy="2.5" r="1.8" fill="none" stroke="#ddd" stroke-width="1"/><path d="M1 5 H13 M7 5 V9 L3.5 13 M7 9 L10.5 13" fill="none" stroke="#ddd" stroke-width="1.1"/><path d="M2 12 L12 2" stroke="#ddd" stroke-width="1"/></svg>
<div class="t" style="left:219.00px;top:784.35px;font-size:11.4px;color:#e6e6e6;font-weight:400;font-family:'Liberation Sans',sans-serif;">Accessibility: Investigate</div>
<svg class="r" style="left:791px;top:784px;" width="14" height="12" viewBox="0 0 14 12"><path d="M4 3 L7 0.5 L10 3" fill="none" stroke="#ddd" stroke-width="1"/><path d="M1 5.5 H13 M1 8 H13 M1 10.5 H13" stroke="#ddd" stroke-width="1.1"/></svg>
<div class="t" style="left:807.50px;top:784.69px;font-size:11.0px;color:#e6e6e6;font-weight:400;font-family:'Liberation Sans',sans-serif;">Notes</div>
<svg class="r" style="left:854px;top:784px;" width="13" height="12" viewBox="0 0 13 12"><path d="M0.5 0.5 H12.5 V8.5 H5 L2 11.5 V8.5 H0.5z" fill="#e6e6e6"/></svg>
<div class="t" style="left:870.00px;top:784.69px;font-size:11.0px;color:#e6e6e6;font-weight:400;font-family:'Liberation Sans',sans-serif;">Comments</div>
<div class="r" style="left:935px;top:781px;width:31px;height:19px;background:#505050;"></div>
<svg class="r" style="left:943px;top:784px;" width="14" height="13" viewBox="0 0 14 13"><rect x="0.7" y="0.7" width="12.6" height="11.6" fill="none" stroke="#e6e6e6" stroke-width="1.3"/><rect x="0.7" y="0.7" width="3.5" height="11.6" fill="#e6e6e6"/><path d="M6 4.5 H11 M6 7 H11" stroke="#e6e6e6" stroke-width="1"/></svg>
<svg class="r" style="left:975px;top:785px;" width="13" height="11" viewBox="0 0 13 11"><rect x="0" y="0" width="5.5" height="4.5" fill="#ddd"/><rect x="7.5" y="0" width="5.5" height="4.5" fill="#ddd"/><rect x="0" y="6.5" width="5.5" height="4.5" fill="#ddd"/><rect x="7.5" y="6.5" width="5.5" height="4.5" fill="#ddd"/></svg>
<svg class="r" style="left:1007px;top:784px;" width="15" height="13" viewBox="0 0 15 13"><path d="M0.7 1 H6.5 Q7.5 1 7.5 2 Q7.5 1 8.5 1 H14.3 V12 H8.5 Q7.5 12 7.5 13 Q7.5 12 6.5 12 H0.7z" fill="none" stroke="#ddd" stroke-width="1.1"/><path d="M2.5 4 H5.5 M2.5 6.5 H5.5 M9.5 4 H12.5 M9.5 6.5 H12.5" stroke="#ddd" stroke-width="0.9"/></svg>
<svg class="r" style="left:1039px;top:784px;" width="14" height="13" viewBox="0 0 14 13"><rect x="0.7" y="0.7" width="12.6" height="8" fill="none" stroke="#ddd" stroke-width="1.2"/><path d="M7 9 V12.5 M4 12.5 H10" stroke="#ddd" stroke-width="1.2"/><rect x="3.5" y="3.5" width="5" height="3" fill="#ddd"/></svg>
<div class="r" style="left:1069px;top:789px;width:8px;height:2px;background:#e6e6e6;"></div>
<div class="r" style="left:1083px;top:789px;width:87px;height:2px;background:#8a8a8a;border-radius:1px;"></div>
<svg class="r" style="left:1123px;top:784px;" width="12" height="12" viewBox="0 0 12 12"><circle cx="6" cy="6" r="5.2" fill="#d8d8d8" stroke="#aaa" stroke-width="0.6"/></svg>
<svg class="r" style="left:1176px;top:786px;" width="9" height="9" viewBox="0 0 9 9"><path d="M4.5 0 V9 M0 4.5 H9" stroke="#fff" stroke-width="2"/></svg>
<div class="t" style="left:1199.00px;top:785.02px;font-size:10.6px;color:#e6e6e6;font-weight:400;font-family:'Liberation Sans',sans-serif;">127%</div>
<svg class="r" style="left:1243px;top:784px;" width="13" height="13" viewBox="0 0 13 13"><rect x="0.6" y="0.6" width="11.8" height="11.8" fill="none" stroke="#ddd" stroke-width="1.1"/><path d="M3 3 L5 5 M10 3 L8 5 M3 10 L5 8 M10 10 L8 8" stroke="#ddd" stroke-width="1.3"/></svg>
<div class="r" style="left:1278px;top:20px;width:2px;height:780px;background:#4a4a4a;"></div>
<div class="t k" style="left:9.40px;top:137.38px;font-size:13.6px;color:#e8e8e8;font-weight:400;font-family:'Liberation Sans',sans-serif;-webkit-text-stroke:0.45px currentColor;">1</div>
<div class="t k" style="left:9.40px;top:192.48px;font-size:13.6px;color:#e8e8e8;font-weight:400;font-family:'Liberation Sans',sans-serif;-webkit-text-stroke:0.45px currentColor;">2</div>
<div class="t k" style="left:9.40px;top:247.58px;font-size:13.6px;color:#e8e8e8;font-weight:400;font-family:'Liberation Sans',sans-serif;-webkit-text-stroke:0.45px currentColor;">3</div>
<div class="t k" style="left:9.40px;top:302.68px;font-size:13.6px;color:#e8e8e8;font-weight:400;font-family:'Liberation Sans',sans-serif;-webkit-text-stroke:0.45px currentColor;">4</div>
<div class="t k" style="left:9.40px;top:357.78px;font-size:13.6px;color:#e8e8e8;font-weight:400;font-family:'Liberation Sans',sans-serif;-webkit-text-stroke:0.45px currentColor;">5</div>
<div class="t k" style="left:9.40px;top:412.88px;font-size:13.6px;color:#e8e8e8;font-weight:400;font-family:'Liberation Sans',sans-serif;-webkit-text-stroke:0.45px currentColor;">6</div>
<div class="t k" style="left:9.40px;top:467.98px;font-size:13.6px;color:#e8e8e8;font-weight:400;font-family:'Liberation Sans',sans-serif;-webkit-text-stroke:0.45px currentColor;">7</div>
<div class="t k" style="left:9.40px;top:523.08px;font-size:13.6px;color:#e8e8e8;font-weight:400;font-family:'Liberation Sans',sans-serif;-webkit-text-stroke:0.45px currentColor;">8</div>
<div class="t k" style="left:9.40px;top:578.18px;font-size:13.6px;color:#e8e8e8;font-weight:400;font-family:'Liberation Sans',sans-serif;-webkit-text-stroke:0.45px currentColor;">9</div>
<div class="t k" style="left:5.40px;top:633.28px;font-size:13.6px;color:#e8e8e8;font-weight:400;font-family:'Liberation Sans',sans-serif;-webkit-text-stroke:0.45px currentColor;">10</div>
<div class="t k" style="left:5.40px;top:688.38px;font-size:13.6px;color:#e8e8e8;font-weight:400;font-family:'Liberation Sans',sans-serif;-webkit-text-stroke:0.45px currentColor;">11</div>
<div class="t k" style="left:5.40px;top:743.48px;font-size:13.6px;color:#e8e8e8;font-weight:400;font-family:'Liberation Sans',sans-serif;-webkit-text-stroke:0.45px currentColor;">12</div>
<div class="r" style="left:24px;top:132px;width:75px;height:46px;background:#e46b4e;border-radius:2px;"></div>
<div class="r" style="left:27px;top:135px;width:69px;height:40px;background:#2d2d2d;"></div>
<div style="position:absolute;left:0;top:0;width:1280px;height:800px;clip-path:inset(128px 1165px 20px 0)">
<div class="r" style="left:25px;top:133px;width:73px;height:45px;background:#e4704f;border-radius:2px;"></div>
<div class="r" style="left:28px;top:136px;width:67px;height:39px;background:#3a3a3a;"></div>
<div class="r" style="left:28.7px;top:136.6px;width:65.5px;height:37.5px;background:#ffffff;"></div>
<div class="r" style="left:30.3px;top:138.2px;width:1.6px;height:5.5px;background:#3a2470;opacity:1"></div>
<div class="r" style="left:31.9px;top:138.2px;width:1.5px;height:5.5px;background:#3d7cc9;opacity:1"></div>
<div class="r" style="left:34.0px;top:139.2px;width:11.6px;height:0.9px;background:#777;opacity:0.48"></div>
<div class="r" style="left:34.0px;top:140.9px;width:11.6px;height:1.3px;background:#333;opacity:0.6"></div>
<div class="r" style="left:49.3px;top:139.4px;width:15.3px;height:0.9px;background:#666;opacity:0.6"></div>
<div class="r" style="left:49.3px;top:141.1px;width:15.3px;height:0.8px;background:#333;opacity:0.5"></div>
<div class="r" style="left:67.6px;top:138.9px;width:4.9px;height:3.4px;background:#555;opacity:0.36"></div>
<div class="r" style="left:73.8px;top:139.0px;width:18.4px;height:1.0px;background:#444;opacity:0.36"></div>
<div class="r" style="left:73.8px;top:140.9px;width:18.4px;height:0.8px;background:#444;opacity:0.3"></div>
<div class="r" style="left:55.4px;top:151.3px;width:13.5px;height:1.3px;background:#2c3f80;opacity:1"></div>
<div class="r" style="left:45.0px;top:155.2px;width:38.6px;height:2.0px;background:#2c2f60;opacity:1"></div>
<div class="r" style="left:51.7px;top:159.1px;width:24.5px;height:2.2px;background:#2c3a78;opacity:1"></div>
<div class="r" style="left:66.4px;top:163.4px;width:25.1px;height:0.8px;background:#888;opacity:0.3"></div>
<div class="r" style="left:66.4px;top:164.6px;width:17.1px;height:0.8px;background:#888;opacity:0.3"></div>
<div class="r" style="left:67.0px;top:169.8px;width:26.3px;height:2.1px;background:#1f63c0;opacity:1"></div>
<div class="r" style="left:56.0px;top:171.9px;width:9.2px;height:0.8px;background:#aaa;opacity:0.6"></div>
<div class="r" style="left:28.7px;top:191.7px;width:65.5px;height:37.5px;background:#ffffff;"></div>
<div class="r" style="left:32.1px;top:195.4px;width:39.8px;height:2.4px;background:#233d80;opacity:0.9"></div>
<div class="r" style="left:32.1px;top:199.0px;width:22.0px;height:2.4px;background:#233d80;opacity:0.9"></div>
<div class="r" style="left:37.0px;top:203.5px;width:49.0px;height:0.8px;background:#555555;opacity:0.36"></div>
<div class="r" style="left:37.0px;top:204.5px;width:22.0px;height:0.8px;background:#555555;opacity:0.36"></div>
<div class="r" style="left:37.0px;top:207.6px;width:24.5px;height:1.8px;background:#1f63c0;opacity:1"></div>
<div class="r" style="left:61.5px;top:208.0px;width:18.4px;height:0.8px;background:#555555;opacity:0.3"></div>
<div class="r" style="left:37.0px;top:210.1px;width:23.3px;height:2.4px;background:#1f63c0;opacity:1"></div>
<div class="r" style="left:67.6px;top:210.1px;width:23.3px;height:1.8px;background:#1f63c0;opacity:1"></div>
<div class="r" style="left:37.0px;top:215.6px;width:50.2px;height:2.4px;background:#1f63c0;opacity:1"></div>
<div class="r" style="left:66.4px;top:218.6px;width:20.8px;height:1.2px;background:#1f63c0;opacity:0.8"></div>
<div class="r" style="left:37.0px;top:219.9px;width:28.2px;height:2.4px;background:#1f63c0;opacity:1"></div>
<div class="r" style="left:28.7px;top:246.8px;width:65.5px;height:37.5px;background:#ffffff;"></div>
<div class="r" style="left:32.1px;top:249.2px;width:50.2px;height:2.4px;background:#233d80;opacity:0.9"></div>
<div class="r" style="left:32.1px;top:252.9px;width:57.5px;height:2.1px;background:#233d80;opacity:0.9"></div>
<div class="r" style="left:34.0px;top:257.4px;width:47.1px;height:1.0px;background:#333;opacity:0.8"></div>
<div class="r" style="left:35.8px;top:260.5px;width:52.0px;height:0.9px;background:#b8b8b8;opacity:0.6"></div>
<div class="r" style="left:35.8px;top:262.3px;width:52.0px;height:0.9px;background:#b8b8b8;opacity:0.6"></div>
<div class="r" style="left:35.8px;top:265.4px;width:52.0px;height:0.9px;background:#b8b8b8;opacity:0.6"></div>
<div class="r" style="left:35.8px;top:267.2px;width:22.0px;height:0.9px;background:#b8b8b8;opacity:0.6"></div>
<div class="r" style="left:35.8px;top:270.2px;width:52.0px;height:0.9px;background:#b8b8b8;opacity:0.6"></div>
<div class="r" style="left:35.8px;top:274.5px;width:52.0px;height:0.9px;background:#b8b8b8;opacity:0.6"></div>
<div class="r" style="left:35.8px;top:276.0px;width:17.1px;height:0.8px;background:#b8b8b8;opacity:0.6"></div>
<div class="r" style="left:35.8px;top:278.3px;width:52.0px;height:1.3px;background:#b8b8b8;opacity:0.6"></div>
<div class="r" style="left:34.0px;top:280.7px;width:39.8px;height:1.0px;background:#444;opacity:0.48"></div>
<div class="r" style="left:28.7px;top:301.9px;width:65.5px;height:37.5px;background:#ffffff;"></div>
<div class="r" style="left:32.1px;top:305.6px;width:28.2px;height:2.7px;background:#233d80;opacity:0.9"></div>
<div class="r" style="left:35.2px;top:316.6px;width:52.7px;height:1.8px;background:#1f63c0;opacity:1"></div>
<div class="r" style="left:35.2px;top:318.4px;width:11.6px;height:1.8px;background:#1f63c0;opacity:1"></div>
<div class="r" style="left:37.0px;top:314.9px;width:38.0px;height:0.8px;background:#b8b8b8;opacity:0.6"></div>
<div class="r" style="left:56.0px;top:322.1px;width:19.6px;height:1.8px;background:#1f63c0;opacity:1"></div>
<div class="r" style="left:35.2px;top:323.9px;width:33.7px;height:1.8px;background:#1f63c0;opacity:1"></div>
<div class="r" style="left:37.0px;top:320.7px;width:50.2px;height:0.8px;background:#b8b8b8;opacity:0.6"></div>
<div class="r" style="left:35.2px;top:327.6px;width:58.2px;height:2.4px;background:#1f63c0;opacity:1"></div>
<div class="r" style="left:35.2px;top:330.1px;width:17.8px;height:1.5px;background:#1f63c0;opacity:1"></div>
<div class="r" style="left:35.2px;top:332.5px;width:58.2px;height:1.8px;background:#000;opacity:1"></div>
<div class="r" style="left:35.2px;top:334.3px;width:9.2px;height:1.8px;background:#000;opacity:1"></div>
<div class="r" style="left:28.7px;top:357.0px;width:65.5px;height:37.5px;background:#ffffff;"></div>
<div class="r" style="left:32.1px;top:359.4px;width:49.6px;height:2.1px;background:#233d80;opacity:0.9"></div>
<div class="r" style="left:32.1px;top:364.3px;width:36.1px;height:2.1px;background:#233d80;opacity:0.9"></div>
<div class="r" style="left:32.1px;top:368.6px;width:31.8px;height:1.0px;background:#444;opacity:0.42"></div>
<div class="r" style="left:32.1px;top:371.1px;width:32.4px;height:1.0px;background:#998;opacity:0.42"></div>
<div class="r" style="left:32.1px;top:373.8px;width:9.2px;height:1.0px;background:#444;opacity:0.42"></div>
<div class="r" style="left:32.1px;top:379.0px;width:22.7px;height:1.2px;background:#667;opacity:0.6"></div>
<div class="r" style="left:58.1px;top:376.6px;width:10.2px;height:4.0px;background:#2c55a8;opacity:1"></div>
<div class="r" style="left:68.2px;top:375.7px;width:2.4px;height:5.8px;background:#2c55a8;opacity:1"></div>
<div class="r" style="left:71.9px;top:363.9px;width:8.0px;height:0.8px;background:#b8b8b8;opacity:0.6"></div>
<div class="r" style="left:71.9px;top:366.3px;width:15.3px;height:0.8px;background:#b8b8b8;opacity:0.6"></div>
<div class="r" style="left:71.9px;top:368.8px;width:10.4px;height:0.8px;background:#b8b8b8;opacity:0.6"></div>
<div class="r" style="left:71.9px;top:371.2px;width:15.3px;height:0.8px;background:#b8b8b8;opacity:0.6"></div>
<div class="r" style="left:71.9px;top:373.7px;width:11.6px;height:0.8px;background:#b8b8b8;opacity:0.6"></div>
<div class="r" style="left:71.9px;top:377.8px;width:9.2px;height:1.0px;background:#a66;opacity:0.6"></div>
<div class="r" style="left:71.9px;top:380.4px;width:12.9px;height:0.8px;background:#b8b8b8;opacity:0.6"></div>
<div class="r" style="left:71.9px;top:382.5px;width:17.8px;height:0.8px;background:#b8b8b8;opacity:0.6"></div>
<div class="r" style="left:71.9px;top:384.7px;width:11.6px;height:0.8px;background:#b8b8b8;opacity:0.6"></div>
<div class="r" style="left:71.9px;top:389.0px;width:6.7px;height:0.8px;background:#b8b8b8;opacity:0.6"></div>
<div class="r" style="left:71.9px;top:390.8px;width:14.1px;height:0.8px;background:#b8b8b8;opacity:0.6"></div>
<div class="r" style="left:28.7px;top:412.1px;width:65.5px;height:37.5px;background:#ffffff;"></div>
<div class="r" style="left:32.1px;top:414.2px;width:49.6px;height:2.4px;background:#233d80;opacity:0.9"></div>
<div class="r" style="left:32.1px;top:419.1px;width:50.8px;height:2.4px;background:#233d80;opacity:0.9"></div>
<div class="r" style="left:32.1px;top:422.8px;width:30.6px;height:2.4px;background:#233d80;opacity:0.9"></div>
<div class="r" style="left:34.0px;top:429.1px;width:52.0px;height:0.9px;background:#555;opacity:0.42"></div>
<div class="r" style="left:50.5px;top:432.1px;width:17.1px;height:0.9px;background:#555;opacity:0.42"></div>
<div class="r" style="left:51.7px;top:434.0px;width:13.5px;height:0.9px;background:#333;opacity:0.8"></div>
<div class="r" style="left:34.0px;top:436.4px;width:52.0px;height:0.9px;background:#555;opacity:0.42"></div>
<div class="r" style="left:34.0px;top:438.9px;width:52.0px;height:0.9px;background:#555;opacity:0.42"></div>
<div class="r" style="left:34.0px;top:441.3px;width:52.0px;height:0.9px;background:#555;opacity:0.42"></div>
<div class="r" style="left:34.0px;top:443.8px;width:52.0px;height:0.9px;background:#555;opacity:0.42"></div>
<div class="r" style="left:50.5px;top:445.6px;width:17.1px;height:0.9px;background:#555;opacity:0.42"></div>
<div class="r" style="left:28.7px;top:467.2px;width:65.5px;height:37.5px;background:#ffffff;"></div>
<div class="r" style="left:32.7px;top:471.2px;width:39.2px;height:1.7px;background:#2a3560;opacity:0.8"></div>
<div class="r" style="left:35.8px;top:473.9px;width:17.1px;height:16.5px;background:#2b50b0;opacity:1"></div>
<div class="r" style="left:35.8px;top:490.5px;width:17.1px;height:10.4px;background:#3f6fd2;opacity:1"></div>
<div class="r" style="left:52.9px;top:473.9px;width:12.9px;height:11.0px;background:#5a82d4;opacity:1"></div>
<div class="r" style="left:52.9px;top:485.0px;width:12.9px;height:15.9px;background:#6d92dc;opacity:1"></div>
<div class="r" style="left:65.8px;top:473.9px;width:20.8px;height:6.1px;background:#8aa6e2;opacity:1"></div>
<div class="r" style="left:65.8px;top:480.1px;width:10.4px;height:20.8px;background:#a4bae8;opacity:1"></div>
<div class="r" style="left:76.2px;top:480.1px;width:10.4px;height:20.8px;background:#c4d3f0;opacity:1"></div>
<div class="r" style="left:28.7px;top:522.3px;width:65.5px;height:37.5px;background:#ffffff;"></div>
<div class="r" style="left:32.7px;top:526.3px;width:39.2px;height:1.5px;background:#2a3560;opacity:0.8"></div>
<div class="r" style="left:35.8px;top:529.9px;width:16.5px;height:18.4px;background:#2d52b8;opacity:1"></div>
<div class="r" style="left:35.8px;top:548.3px;width:16.5px;height:8.0px;background:#5a80d2;opacity:1"></div>
<div class="r" style="left:52.3px;top:529.9px;width:11.0px;height:13.5px;background:#6e90d8;opacity:1"></div>
<div class="r" style="left:52.3px;top:543.4px;width:11.0px;height:12.9px;background:#84a2de;opacity:0.6"></div>
<div class="r" style="left:63.3px;top:529.9px;width:23.3px;height:7.3px;background:#a0b8e8;opacity:1"></div>
<div class="r" style="left:63.3px;top:537.2px;width:11.6px;height:19.0px;background:#b8caee;opacity:1"></div>
<div class="r" style="left:75.0px;top:537.2px;width:11.6px;height:19.0px;background:#ccd9f2;opacity:1"></div>
<div class="r" style="left:28.7px;top:577.4px;width:65.5px;height:37.5px;background:#ffffff;"></div>
<div class="r" style="left:32.1px;top:581.1px;width:26.9px;height:2.4px;background:#233d80;opacity:0.9"></div>
<div class="r" style="left:32.1px;top:586.6px;width:46.5px;height:1.8px;background:#666;opacity:0.8"></div>
<div class="r" style="left:32.1px;top:590.3px;width:51.4px;height:1.8px;background:#666;opacity:0.8"></div>
<div class="r" style="left:32.1px;top:593.9px;width:41.6px;height:1.8px;background:#666;opacity:0.8"></div>
<div class="r" style="left:32.1px;top:597.6px;width:51.4px;height:1.8px;background:#666;opacity:0.8"></div>
<div class="r" style="left:32.1px;top:601.9px;width:13.5px;height:1.8px;background:#666;opacity:0.8"></div>
<div class="r" style="left:28.7px;top:632.5px;width:65.5px;height:37.5px;background:#ffffff;"></div>
<div class="r" style="left:32.7px;top:636.2px;width:53.3px;height:2.2px;background:#233d80;opacity:0.9"></div>
<div class="r" style="left:34.0px;top:643.3px;width:53.9px;height:1.5px;background:#666;opacity:0.8"></div>
<div class="r" style="left:34.0px;top:646.7px;width:48.4px;height:1.5px;background:#666;opacity:0.8"></div>
<div class="r" style="left:34.0px;top:650.0px;width:50.2px;height:1.5px;background:#666;opacity:0.8"></div>
<div class="r" style="left:34.0px;top:653.3px;width:53.3px;height:1.5px;background:#666;opacity:0.8"></div>
<div class="r" style="left:34.0px;top:656.7px;width:11.6px;height:1.5px;background:#666;opacity:0.8"></div>
<div class="r" style="left:28.7px;top:687.6px;width:65.5px;height:37.5px;background:#ffffff;"></div>
<div class="r" style="left:32.1px;top:691.9px;width:38.6px;height:1.8px;background:#233d80;opacity:0.9"></div>
<div class="r" style="left:33.3px;top:699.2px;width:53.3px;height:1.5px;background:#666;opacity:0.8"></div>
<div class="r" style="left:33.3px;top:702.7px;width:52.7px;height:1.5px;background:#666;opacity:0.8"></div>
<div class="r" style="left:33.3px;top:706.0px;width:50.2px;height:1.5px;background:#666;opacity:0.8"></div>
<div class="r" style="left:33.3px;top:709.3px;width:47.8px;height:1.5px;background:#666;opacity:0.8"></div>
<div class="r" style="left:33.3px;top:712.9px;width:45.3px;height:1.5px;background:#666;opacity:0.8"></div>
<div class="r" style="left:33.3px;top:716.4px;width:19.6px;height:1.5px;background:#666;opacity:0.8"></div>
<div class="r" style="left:28.7px;top:742.7px;width:65.5px;height:37.5px;background:#ffffff;"></div>
<div class="r" style="left:32.7px;top:746.7px;width:28.2px;height:1.8px;background:#233d80;opacity:0.9"></div>
<div class="r" style="left:32.7px;top:750.6px;width:49.0px;height:1.0px;background:#555;opacity:0.48"></div>
<div class="r" style="left:32.7px;top:753.7px;width:49.6px;height:1.0px;background:#555;opacity:0.48"></div>
<div class="r" style="left:32.7px;top:757.4px;width:50.2px;height:1.0px;background:#555;opacity:0.48"></div>
<div class="r" style="left:32.7px;top:760.4px;width:19.6px;height:1.0px;background:#555;opacity:0.48"></div>
<div class="r" style="left:32.7px;top:767.2px;width:49.6px;height:1.0px;background:#555;opacity:0.48"></div>
<div class="r" style="left:32.7px;top:770.2px;width:52.0px;height:1.0px;background:#555;opacity:0.48"></div>
<div class="r" style="left:32.7px;top:773.9px;width:33.7px;height:1.0px;background:#555;opacity:0.48"></div>
</div>
<div class="r" style="left:158px;top:147px;width:1080px;height:609px;background:#ffffff;"></div>
<svg class="r" style="left:158px;top:147px;" width="90" height="130" viewBox="0 0 90 130"><path d="M15.8 11 L35.2 34.5 V87" fill="none" stroke="#3a2470" stroke-width="14.3" stroke-linecap="round" stroke-linejoin="miter"/><path d="M77.6 2 V26.5 L60.5 48.4 V109.4 A7.3 7.3 0 0 1 45.9 109.4 V43.5z" fill="#3d7cc9"/></svg>
<div class="t" style="left:239.40px;top:183.85px;font-size:27.7px;color:#8b8b8b;font-weight:700;font-family:'Liberation Sans',sans-serif;transform:scale(0.862,1.0);transform-origin:0 23.45px;">HOCHSCHULE</div>
<div class="t" style="left:239.40px;top:207.95px;font-size:36.2px;color:#222222;font-weight:700;font-family:'Liberation Sans',sans-serif;transform:scale(0.9,1.0);transform-origin:0 30.65px;">RHEIN-WAAL</div>
<div class="t" style="left:239.80px;top:246.81px;font-size:16.4px;color:#222222;font-weight:400;font-family:'Liberation Sans',sans-serif;transform:scale(1.036,1.0);transform-origin:0 13.89px;-webkit-text-stroke:0.35px currentColor;">Rhine-Waal University</div>
<div class="t" style="left:239.80px;top:265.21px;font-size:16.4px;color:#222222;font-weight:400;font-family:'Liberation Sans',sans-serif;transform:scale(1.02,1.0);transform-origin:0 13.89px;-webkit-text-stroke:0.35px currentColor;">of Applied Sciences</div>
<div class="r" style="left:473px;top:188px;width:2px;height:92px;background:#3a3a3a;"></div>
<div class="t" style="left:500.50px;top:186.08px;font-size:24.0px;color:#333333;font-weight:400;font-family:'Liberation Sans',sans-serif;transform:scale(1.0,1.0);transform-origin:0 20.32px;">Faculty of</div>
<div class="t" style="left:500.00px;top:219.37px;font-size:22.0px;color:#222222;font-weight:700;font-family:'Liberation Sans',sans-serif;transform:scale(1.02,1.13);transform-origin:0 18.63px;">Society and Economics</div>
<svg class="r" style="left:796px;top:158px;" width="84" height="84" viewBox="0 0 84 84"><circle cx="41.8" cy="41.2" r="38.6" fill="none" stroke="#333" stroke-width="2.4"/><circle cx="41.8" cy="41.2" r="34.8" fill="none" stroke="#333" stroke-width="1.2"/><path d="M28.5 24.5 L41.7 14.5 L55 24.5" fill="none" stroke="#333" stroke-width="1.4"/><path d="M31.5 24 L41.7 17.5 L52 24" fill="none" stroke="#333" stroke-width="0.8"/><path d="M16.6 56 V25.8 H25.4 V24.2 H58.4 V25.8 H66.8 V56z" fill="none" stroke="#333" stroke-width="1.3"/><path d="M25.4 25.8 V56 M58.4 25.8 V56" stroke="#333" stroke-width="1.1"/><g fill="#333"><rect x="26.6" y="29" width="2" height="4"/><rect x="31.6" y="29" width="2" height="4"/><rect x="36.5" y="29" width="2" height="4"/><rect x="40.6" y="29" width="2" height="4"/><rect x="45.5" y="29" width="2" height="4"/><rect x="50.4" y="29" width="2" height="4"/><rect x="55.3" y="29" width="2" height="4"/><rect x="19.2" y="29" width="2" height="4"/><rect x="61.9" y="29" width="2" height="4"/><rect x="26.6" y="37.5" width="2" height="4"/><rect x="31.6" y="37.5" width="2" height="4"/><rect x="36.5" y="37.5" width="2" height="4"/><rect x="40.6" y="37.5" width="2" height="4"/><rect x="45.5" y="37.5" width="2" height="4"/><rect x="50.4" y="37.5" width="2" height="4"/><rect x="55.3" y="37.5" width="2" height="4"/><rect x="19.2" y="37.5" width="2" height="4"/><rect x="61.9" y="37.5" width="2" height="4"/><rect x="26.6" y="45" width="2" height="4"/><rect x="31.6" y="45" width="2" height="4"/><rect x="36.5" y="45" width="2" height="4"/><rect x="40.6" y="45" width="2" height="4"/><rect x="45.5" y="45" width="2" height="4"/><rect x="50.4" y="45" width="2" height="4"/><rect x="55.3" y="45" width="2" height="4"/><rect x="19.2" y="45" width="2" height="4"/><rect x="61.9" y="45" width="2" height="4"/><circle cx="41.7" cy="22" r="1.3"/><rect x="30.5" y="51.5" width="22.5" height="1"/><rect x="32.5" y="53.5" width="18.5" height="1.2"/></g><text x="41.8" y="69" text-anchor="middle" font-family="Liberation Serif" font-size="10.5" fill="#333">1885</text></svg>
<div class="t" style="left:900.00px;top:173.74px;font-size:23.0px;color:#333333;font-weight:400;font-family:'Liberation Serif',serif;transform:scale(1.112,1.0);transform-origin:0 19.26px;-webkit-text-stroke:0.3px currentColor;">National Technical University</div>
<div class="t" style="left:891.80px;top:198.34px;font-size:23.0px;color:#333333;font-weight:400;font-family:'Liberation Serif',serif;transform:scale(1.103,1.0);transform-origin:0 19.26px;-webkit-text-stroke:0.3px currentColor;">“Kharkiv Polytechnic Institute”</div>
<div class="t" style="left:904.50px;top:238.80px;font-size:20.2px;color:#333333;font-weight:400;font-family:'Liberation Sans',sans-serif;transform:scale(1.0,1.03);transform-origin:0 17.10px;">Department of Management</div>
<div class="t" style="left:601.50px;top:354.06px;font-size:49.3px;color:#0c2166;font-weight:700;font-family:'Liberation Sans',sans-serif;transform:scale(1.0,1.035);transform-origin:0 41.74px;">Role Play.</div>
<div class="t" style="left:439.00px;top:412.66px;font-size:49.3px;color:#0c2166;font-weight:700;font-family:'Liberation Sans',sans-serif;transform:scale(1.0,1.035);transform-origin:0 41.74px;">Model the Negotiations:</div>
<div class="r" style="left:438px;top:460px;width:560px;height:5px;background:#0c2166;"></div>
<div class="t" style="left:535.20px;top:472.26px;font-size:49.3px;color:#0c2166;font-weight:700;font-family:'Liberation Sans',sans-serif;transform:scale(1.0,1.035);transform-origin:0 41.74px;">Ukraine and EU</div>
<div class="r" style="left:535px;top:519.7px;width:366px;height:5px;background:#0c2166;"></div>
<div class="t" style="left:797.50px;top:571.40px;font-size:20.2px;color:#363636;font-weight:700;font-family:'Liberation Sans',sans-serif;transform:scale(1.0,1.035);transform-origin:0 17.10px;">Teacher:</div>
<div class="t" style="left:797.50px;top:595.30px;font-size:20.2px;color:#363636;font-weight:400;font-family:'Liberation Sans',sans-serif;transform:scale(1.0,1.035);transform-origin:0 17.10px;">Associate professor, PhD, Natalia Shyriaieva</div>
<svg class="r" style="left:1103px;top:613px;" width="95" height="5" viewBox="0 0 95 5"><path d="M0 3 L1.5 1 L4.5 3 L7.5 1 L10.5 3 L13.5 1 L16.5 3 L19.5 1 L22.5 3 L25.5 1 L28.5 3 L31.5 1 L34.5 3 L37.5 1 L40.5 3 L43.5 1 L46.5 3 L49.5 1 L52.5 3 L55.5 1 L58.5 3 L61.5 1 L64.5 3 L67.5 1 L70.5 3 L73.5 1 L76.5 3 L79.5 1 L82.5 3 L85.5 1 L88.5 3 L91.5 1" fill="none" stroke="#e02020" stroke-width="0.9"/></svg>
<div class="t" style="left:797.50px;top:643.90px;font-size:20.2px;color:#363636;font-weight:700;font-family:'Liberation Sans',sans-serif;transform:scale(1.0,1.035);transform-origin:0 17.10px;">Email:</div>
<div class="t" style="left:797.50px;top:667.40px;font-size:20.2px;color:#1d5eb5;font-weight:400;font-family:'Liberation Sans',sans-serif;transform:scale(1.0,1.035);transform-origin:0 17.10px;">natalia.shyriaieva@hochschule-rhein-waal.de</div>
<div class="r" style="left:797px;top:686.5px;width:407px;height:1.6px;background:#1d5eb5;"></div>
<div class="t" style="left:797.50px;top:691.40px;font-size:20.2px;color:#1d5eb5;font-weight:400;font-family:'Liberation Sans',sans-serif;transform:scale(1.0,1.035);transform-origin:0 17.10px;">natalia.shyriaieva@khpi.edu.ua</div>
<div class="r" style="left:797px;top:710.8px;width:281px;height:1.6px;background:#1d5eb5;"></div>
<div class="t" style="left:613.30px;top:721.05px;font-size:13.4px;color:#8a8a8a;font-weight:400;font-family:'Liberation Sans',sans-serif;transform:scale(1.0,1.03);transform-origin:0 11.35px;">Natalia Shyriaieva, SS 22/23</div>
<div class="t" style="left:1148.50px;top:721.05px;font-size:13.4px;color:#8a8a8a;font-weight:400;font-family:'Liberation Sans',sans-serif;transform:scale(1.0,1.03);transform-origin:0 11.35px;">1</div>
</body></html>
